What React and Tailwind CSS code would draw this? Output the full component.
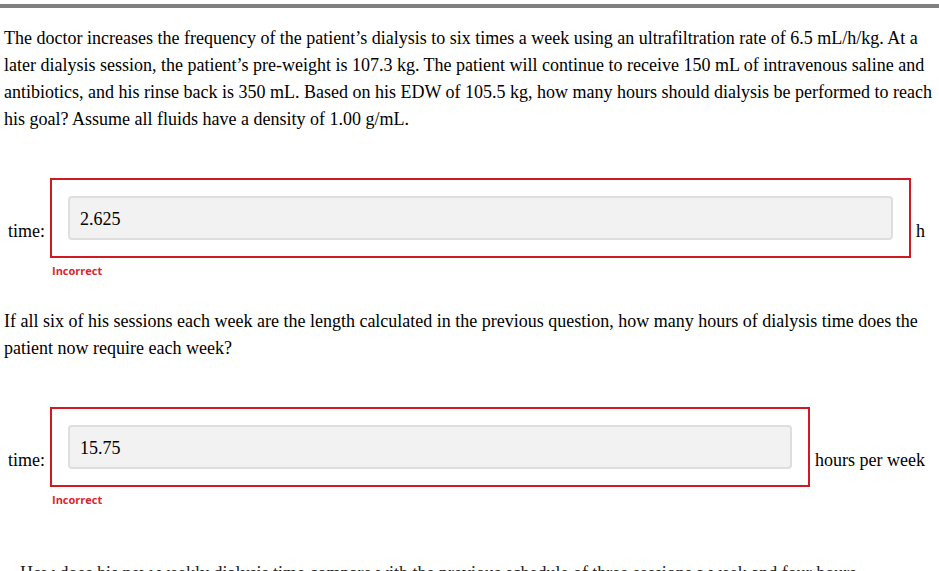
const serif = { fontFamily: '"Liberation Serif", "Times New Roman", serif' };

function AnswerRow({ value, unit, boxClass }) {
  return (
    <div className="flex items-start pl-2 pr-[14px]">
      <span className="pt-[40px] pr-[5px] text-[18px] leading-[27px] text-black">time:</span>
      <div className={boxClass}>
        <div className="border-2 border-[#cf1a24] h-[80px] px-4 pt-4">
          <div className="h-[44px] rounded border-2 border-[#dedede] bg-[#f2f2f2] pl-[10px] pt-[2px] flex items-center text-[18px] text-black">
            {value}
          </div>
        </div>
        <div className="pl-[2px] pt-[6px] text-[11px] leading-[14px] font-bold text-[#d9252f]" style={{ fontFamily: '"Open Sans", "Noto Sans", sans-serif' }}>
          Incorrect
        </div>
      </div>
      <span className="pt-[40px] pl-[5px] text-[18px] leading-[27px] text-black">{unit}</span>
    </div>
  );
}

export default function App() {
  return (
    <div className="w-[939px] h-[571px] overflow-hidden bg-white" style={serif}>
      <div className="pt-1">
        <div className="h-1 bg-[#808080]" />
      </div>
      <p className="pl-1 pr-[4px] pt-[17px] text-[18px] leading-[27px] text-black">
        The doctor increases the frequency of the patient’s dialysis to six times a week using an ultrafiltration rate of 6.5 mL/h/kg. At a later dialysis session, the patient’s pre-weight is 107.3 kg. The patient will continue to receive 150 mL of intravenous saline and antibiotics, and his rinse back is 350 mL. Based on his EDW of 105.5 kg, how many hours should dialysis be performed to reach his goal? Assume all fluids have a density of 1.00 g/mL.
      </p>
      <div className="pt-[45px]">
        <AnswerRow value="2.625" unit="h" boxClass="flex-1" />
      </div>
      <p className="pl-1 pr-[4px] pt-[30px] text-[18px] leading-[27px] text-black">
        If all six of his sessions each week are the length calculated in the previous question, how many hours of dialysis time does the patient now require each week?
      </p>
      <div className="pt-[45px]">
        <AnswerRow value="15.75" unit="hours per week" boxClass="w-[760px]" />
      </div>
      <p className="pl-5 pr-[45px] pt-[53px] text-[18px] leading-[27px] text-[#222]">
        How does his new weekly dialysis time compare with the previous schedule of three sessions a week and four hours each?
      </p>
    </div>
  );
}
